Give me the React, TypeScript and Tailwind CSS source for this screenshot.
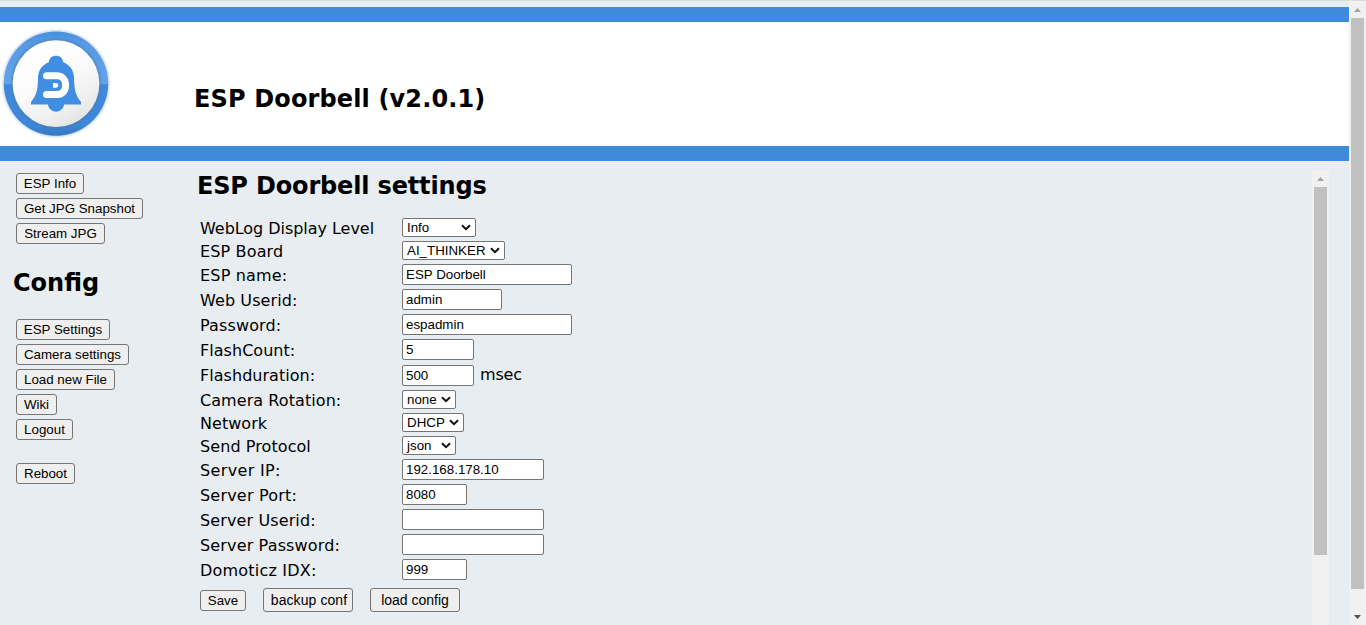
import type { ReactNode } from "react";

type Field = {
  label: string;
  tracking: string;
  kind: "select" | "input";
  value: string;
  width: string;
  suffix?: string;
};

const fields: Field[] = [
  { label: "WebLog Display Level", tracking: "tracking-[-0.04px]", kind: "select", value: "Info", width: "w-[74px]" },
  { label: "ESP Board", tracking: "tracking-[0.15px]", kind: "select", value: "AI_THINKER", width: "w-[103px]" },
  { label: "ESP name:", tracking: "tracking-[0.18px]", kind: "input", value: "ESP Doorbell", width: "w-[170px]" },
  { label: "Web Userid:", tracking: "tracking-[0.1px]", kind: "input", value: "admin", width: "w-[100px]" },
  { label: "Password:", tracking: "tracking-[0.14px]", kind: "input", value: "espadmin", width: "w-[170px]" },
  { label: "FlashCount:", tracking: "tracking-[0.04px]", kind: "input", value: "5", width: "w-[72px]" },
  { label: "Flashduration:", tracking: "tracking-[0.04px]", kind: "input", value: "500", width: "w-[72px]", suffix: "msec" },
  { label: "Camera Rotation:", tracking: "tracking-[0.07px]", kind: "select", value: "none", width: "w-[54px]" },
  { label: "Network", tracking: "tracking-[0.04px]", kind: "select", value: "DHCP", width: "w-[62px]" },
  { label: "Send Protocol", tracking: "tracking-[0.08px]", kind: "select", value: "json", width: "w-[54px]" },
  { label: "Server IP:", tracking: "tracking-[0.35px]", kind: "input", value: "192.168.178.10", width: "w-[142px]" },
  { label: "Server Port:", tracking: "tracking-[0.2px]", kind: "input", value: "8080", width: "w-[65px]" },
  { label: "Server Userid:", tracking: "tracking-[0.12px]", kind: "input", value: "", width: "w-[142px]" },
  { label: "Server Password:", tracking: "tracking-[0.15px]", kind: "input", value: "", width: "w-[142px]" },
  { label: "Domoticz IDX:", tracking: "tracking-[0.2px]", kind: "input", value: "999", width: "w-[65px]" },
];

function Button({ children, size }: { children: ReactNode; size: string }) {
  return (
    <button
      className={`flex shrink-0 items-center justify-center rounded-[3px] border border-[#767676] bg-[#efefef] font-['Liberation_Sans',sans-serif] leading-[15px] whitespace-nowrap text-black ${size}`}
    >
      {children}
    </button>
  );
}

function SelectBox({ value, width }: { value: string; width: string }) {
  return (
    <div
      className={`flex h-[19px] items-center justify-between rounded-[2px] border border-[#767676] bg-white pr-1 pl-1 font-['Liberation_Sans',sans-serif] text-[13.333px] leading-[17px] ${width}`}
    >
      <span>{value}</span>
      <svg width="10" height="7" viewBox="0 0 10 7" fill="none" className="shrink-0">
        <path d="M1 1.2 L5 5.2 L9 1.2" stroke="#101010" strokeWidth="2" />
      </svg>
    </div>
  );
}

function Logo() {
  return (
    <svg width="112" height="112" viewBox="0 0 112 112" className="shrink-0">
      <defs>
        <linearGradient id="face" x1="0.25" y1="0.1" x2="0.75" y2="1">
          <stop offset="0" stopColor="#ffffff" />
          <stop offset="0.4" stopColor="#fbfbfb" />
          <stop offset="0.7" stopColor="#f1f1f1" />
          <stop offset="1" stopColor="#e2e2e2" />
        </linearGradient>
        <linearGradient id="ring" x1="0" y1="0" x2="0" y2="1">
          <stop offset="0" stopColor="#4a90df" />
          <stop offset="0.12" stopColor="#589ae5" />
          <stop offset="0.5" stopColor="#64a3e9" />
          <stop offset="0.51" stopColor="#4189db" />
          <stop offset="0.9" stopColor="#3d86d8" />
          <stop offset="1" stopColor="#3577c2" />
        </linearGradient>
        <filter id="soft" x="-10%" y="-10%" width="120%" height="120%">
          <feGaussianBlur stdDeviation="0.8" />
        </filter>
      </defs>
      <circle cx="56" cy="55.6" r="53.4" fill="#c3d6ea" filter="url(#soft)" />
      <circle cx="56" cy="55.6" r="52.2" fill="url(#ring)" />
      <circle cx="56" cy="55.8" r="44.4" fill="#477faf" filter="url(#soft)" />
      <circle cx="56" cy="55.6" r="43.4" fill="url(#face)" />
      <path
        d="M49 34 C49 25.8 63 25.8 63 34 C70 37 73.5 42 74 49 C74.2 60 75 67 81 74 V76.5 H64 C63.3 86 49 86 48 76.5 H31 V74 C37 67 38 60 38 49 C38.5 42 42 37 49 34 Z"
        fill="#418de1"
      />
      <path
        d="M46.5 47.8 H57 C62 47.8 65.6 51.5 65.6 57.2 C65.6 63 62 66.5 57 66.5 H46.5"
        fill="none"
        stroke="white"
        strokeWidth="7"
        strokeLinecap="round"
      />
      <path d="M53 55 H56 Q58.3 55 58.3 57.3 Q58.3 59.7 56 59.7 H53 Z" fill="white" />
    </svg>
  );
}

export default function App() {
  return (
    <div className="flex h-[625px] w-[1366px] overflow-hidden bg-[#e7edf1] font-['DejaVu_Sans',sans-serif] text-black">
      <main className="flex w-[1349px] flex-col">
        <div className="h-[7px] shrink-0 border-t border-[#d9dbdf]" />
        <header className="flex h-[154px] shrink-0 border-y-[15px] border-[#3f8adb] bg-white pt-[6px]">
          <Logo />
          <h1 className="mt-[55px] ml-[82px] text-2xl leading-[32px] font-bold tracking-[0.14px] whitespace-nowrap">
            ESP Doorbell (v2.0.1)
          </h1>
        </header>
        <div className="flex flex-1">
          <nav className="flex w-[197px] shrink-0 flex-col items-start gap-1 pt-[12px] pl-4">
            <Button size="h-[21px] w-[68px] text-[13.333px]">ESP Info</Button>
            <Button size="h-[21px] w-[127px] text-[13.333px]">Get JPG Snapshot</Button>
            <Button size="h-[21px] w-[89px] text-[13.333px]">Stream JPG</Button>
            <h2 className="mt-[19px] mb-[16px] -ml-[3px] text-2xl leading-[32px] font-bold">Config</h2>
            <Button size="h-[21px] w-[94px] text-[13.333px]">ESP Settings</Button>
            <Button size="h-[21px] w-[113px] text-[13.333px]">Camera settings</Button>
            <Button size="h-[21px] w-[99px] text-[13.333px]">Load new File</Button>
            <Button size="h-[21px] w-[41px] text-[13.333px]">Wiki</Button>
            <Button size="h-[21px] w-[57px] text-[13.333px]">Logout</Button>
            <div className="h-[15px]" />
            <Button size="h-[21px] w-[59px] text-[13.333px]">Reboot</Button>
          </nav>
          <section className="w-[1115px] shrink-0 pt-[9px]">
            <h2 className="mb-[14px] text-2xl leading-[32px] font-bold tracking-[-0.16px]">ESP Doorbell settings</h2>
            <div className="pl-[3px]">
              {fields.map((f) => (
                <div
                  key={f.label}
                  className={`flex items-center ${
                    f.kind === "select" ? "h-[23px]" : f.suffix ? "h-[26px] pt-px" : "h-[25px]"
                  }`}
                >
                  <label
                    className={`w-[202px] text-base leading-[20px] whitespace-nowrap ${f.tracking} ${
                      f.suffix ? "" : "pt-[2px]"
                    }`}
                  >
                    {f.label}
                  </label>
                  {f.kind === "select" ? (
                    <SelectBox value={f.value} width={f.width} />
                  ) : (
                    <input
                      readOnly
                      value={f.value}
                      className={`h-[21px] rounded-[2px] border border-[#767676] bg-white px-[3px] font-['Liberation_Sans',sans-serif] text-[13.333px] leading-[15px] outline-none ${f.width}`}
                    />
                  )}
                  {f.suffix && <span className="ml-[6px] pb-[2px] text-base leading-[20px] tracking-[-0.15px]">{f.suffix}</span>}
                </div>
              ))}
              <div className="flex items-center gap-[17px] pt-[6px]">
                <Button size="mt-px h-[21px] w-[46px] text-[13.333px]">Save</Button>
                <Button size="h-[24px] w-[90px] pl-[2px] text-[14px] tracking-[0.08px]">backup conf</Button>
                <Button size="h-[24px] w-[90px] text-[14px]">load config</Button>
              </div>
            </div>
          </section>
          <div className="mt-[9px] flex w-[17px] shrink-0 flex-col items-center bg-[#f1f1f1]">
            <svg width="17" height="17" viewBox="0 0 17 17" className="shrink-0">
              <path d="M5 11 L8.5 7 L12 11 Z" fill="#a3a3a3" />
            </svg>
            <div className="h-[368px] w-[13px] bg-[#c1c1c1]" />
          </div>
        </div>
      </main>
      <aside className="flex w-[17px] flex-col items-center border-t border-[#d9dbdf] bg-[#f1f1f1]">
        <svg width="17" height="17" viewBox="0 0 17 17" className="shrink-0">
          <path d="M5 11 L8.5 7 L12 11 Z" fill="#a3a3a3" />
        </svg>
        <div className="h-[571px] w-[13px] bg-[#c1c1c1]" />
        <svg width="17" height="17" viewBox="0 0 17 17" className="mt-[19px] shrink-0">
          <path d="M5 7 L8.5 11 L12 7 Z" fill="#505050" />
        </svg>
      </aside>
    </div>
  );
}
